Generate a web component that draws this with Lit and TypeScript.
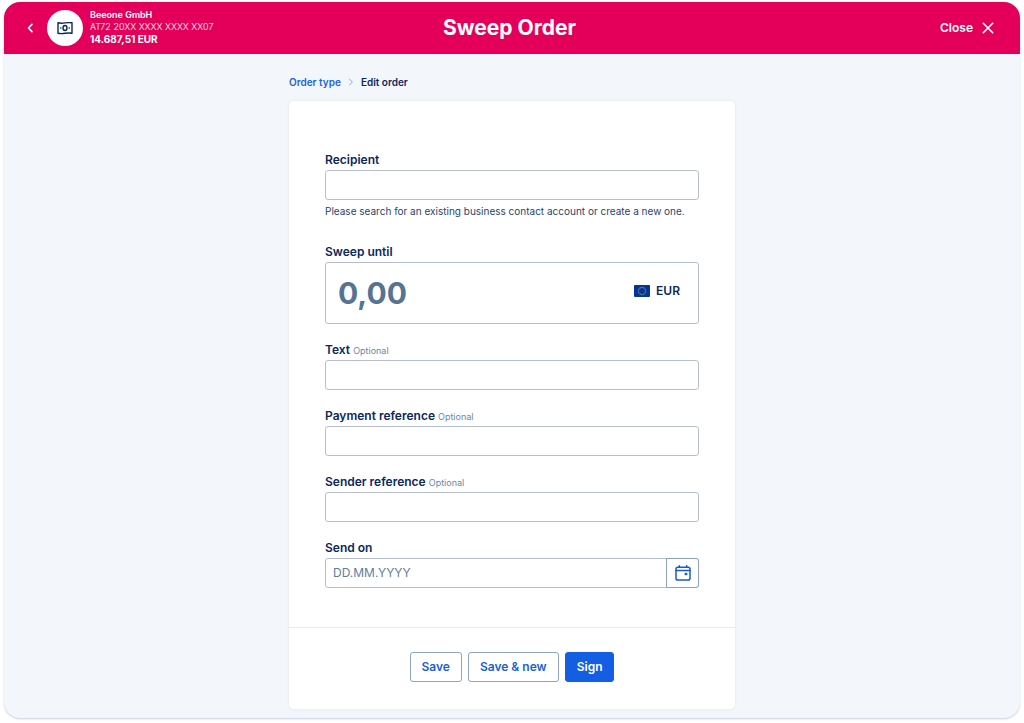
import { LitElement, html, css, svg, nothing } from "lit";
import { customElement, property } from "lit/decorators.js";

const stars = Array.from({ length: 12 }, (_, i) => {
  const a = (i * Math.PI) / 6;
  return { x: 8 + 3.6 * Math.sin(a), y: 6 - 3.6 * Math.cos(a) };
});

@customElement("order-header")
class OrderHeader extends LitElement {
  static styles = css`
    :host {
      display: block;
      background: #e4005a;
      color: #fff;
    }
    .bar {
      display: grid;
      grid-template-columns: 1fr auto 1fr;
      align-items: center;
      height: 52px;
      padding: 0 25px 0 20px;
    }
    .account {
      display: flex;
      align-items: center;
      gap: 7px;
    }
    button {
      display: flex;
      align-items: center;
      gap: 8px;
      padding: 0;
      border: 0;
      background: none;
      color: inherit;
      font: 600 12px/20px Inter, sans-serif;
      cursor: pointer;
    }
    .avatar {
      display: grid;
      place-items: center;
      width: 36px;
      height: 36px;
      margin-left: 4px;
      border-radius: 50%;
      background: #fff;
    }
    .details {
      padding-bottom: 2px;
      font-size: 10px;
      line-height: 12px;
    }
    .name {
      font-weight: 600;
      font-size: 9px;
    }
    .iban {
      font-size: 9px;
      font-weight: 300;
    }
    .balance {
      font-weight: 700;
    }
    h1 {
      margin: 0;
      font-size: 21px;
      line-height: 28px;
      font-weight: 700;
    }
    .close {
      justify-self: end;
    }
    svg {
      display: block;
    }
  `;

  render() {
    return html`
      <header class="bar">
        <div class="account">
          <button aria-label="Back">
            <svg width="12" height="12" viewBox="0 0 12 12" fill="none" stroke="currentColor" stroke-width="1.7" stroke-linecap="round" stroke-linejoin="round">
              <path d="M8 2.300 4.500 6 8 9.700" />
            </svg>
          </button>
          <div class="avatar">
            <svg width="16" height="14" viewBox="0 0 16 14" fill="none" stroke="#0a285c" stroke-width="1.400" stroke-linejoin="round">
              <path d="M1 1.800c2.300.5 4.600.5 7 .1s4.700-.4 7-.1v10.400c-2.300-.3-4.600-.3-7 .1s-4.700.4-7-.1z" />
              <ellipse cx="8" cy="7" rx="2" ry="2.500" />
              <path d="M3.700 7h.2M12.100 7h.2" stroke-linecap="round" />
            </svg>
          </div>
          <div class="details">
            <div class="name">Beeone GmbH</div>
            <div class="iban">AT72 20XX XXXX XXXX XX07</div>
            <div class="balance">14.687,51 EUR</div>
          </div>
        </div>
        <h1>Sweep Order</h1>
        <button class="close">
          Close
          <svg width="14" height="14" viewBox="0 0 14 14" fill="none" stroke="currentColor" stroke-width="1.600" stroke-linecap="round">
            <path d="m2.300 2.300 9.400 9.400M11.700 2.300l-9.400 9.400" />
          </svg>
        </button>
      </header>
    `;
  }
}

@customElement("form-field")
class FormField extends LitElement {
  @property() label = "";
  @property() kind: "text" | "amount" | "date" = "text";
  @property() hint = "";
  @property({ type: Boolean }) optional = false;

  static styles = css`
    :host {
      display: block;
    }
    label {
      display: block;
      font-size: 12px;
      line-height: 20px;
      font-weight: 600;
      color: #0a285c;
    }
    .optional {
      font-size: 9px;
      line-height: 12px;
      font-weight: 400;
      color: #6d86a5;
    }
    .box {
      display: flex;
      box-sizing: border-box;
      height: 30px;
      border: 1px solid #b5bfd0;
      border-radius: 3px;
      background: #fff;
    }
    .amount {
      align-items: center;
      height: 62px;
      padding-right: 18px;
    }
    input {
      flex: 1;
      min-width: 0;
      padding: 0 7px;
      border: 0;
      outline: 0;
      background: none;
      color: #0a285c;
      font: 400 12px/18px Inter, sans-serif;
    }
    input::placeholder {
      color: #627d9d;
      opacity: 1;
    }
    .amount input {
      padding: 0 12px;
      font-size: 30px;
      line-height: 40px;
      font-weight: 700;
    }
    .amount input::placeholder {
      color: #557392;
    }
    .currency {
      display: flex;
      align-items: center;
      gap: 6px;
      font-size: 12px;
      line-height: 18px;
      font-weight: 600;
      color: #0a285c;
      padding-bottom: 4px;
    }
    .picker {
      display: grid;
      place-items: center;
      width: 33px;
      margin: -1px;
      padding: 0;
      border: 1px solid #8da2bd;
      border-radius: 0 3px 3px 0;
      background: #fff;
      cursor: pointer;
    }
    .hint {
      margin: 4px 0 0;
      padding-bottom: 8px;
      font-size: 10px;
      line-height: 14px;
      color: #2b4272;
    }
    svg {
      display: block;
    }
  `;

  private trailing() {
    if (this.kind === "amount") {
      return html`<span class="currency">
        <svg width="16" height="12" viewBox="0 0 16 12">
          <rect width="16" height="12" rx="1" fill="#043399" />
          ${stars.map((s) => svg`<circle cx=${s.x} cy=${s.y} r="0.6" fill="#b5b35c" />`)}
        </svg>
        EUR
      </span>`;
    }
    if (this.kind === "date") {
      return html`<button type="button" class="picker" aria-label="Open calendar">
        <svg width="16" height="16" viewBox="0 0 16 16" fill="none" stroke="#1759d6" stroke-width="1.500" stroke-linecap="round">
          <rect x="1" y="2.300" width="14" height="12.700" rx="1.800" />
          <path d="M1.200 5.500h13.600M4.300.8v1.500M11.700.8v1.500" />
          <circle cx="10.900" cy="9" r="1" fill="#1759d6" stroke-width="1" />
        </svg>
      </button>`;
    }
    return nothing;
  }

  render() {
    const placeholder = this.kind === "amount" ? "0,00" : this.kind === "date" ? "DD.MM.YYYY" : "";
    return html`
      <label for="control">${this.label}${this.optional ? html` <span class="optional">Optional</span>` : nothing}</label>
      <div class="box ${this.kind}">
        <input id="control" type="text" placeholder=${placeholder} />
        ${this.trailing()}
      </div>
      ${this.hint ? html`<p class="hint">${this.hint}</p>` : nothing}
    `;
  }
}

@customElement("app-root")
class AppRoot extends LitElement {
  static styles = css`
    :host {
      display: flex;
      box-sizing: border-box;
      min-height: 100vh;
      padding: 2px 4px 5px;
      background: #fff;
      color: #0a285c;
      font-family: Inter, sans-serif;
    }
    .window {
      flex: 1;
      min-width: 0;
      border-radius: 16px;
      overflow: hidden;
      background: #f3f6fa;
      box-shadow: 0 1px 2px #c3cedd;
    }
    main {
      box-sizing: border-box;
      width: 100%;
      max-width: 446px;
      margin: 0 auto;
      padding: 20px 0 8px;
    }
    .crumbs {
      display: flex;
      align-items: center;
      gap: 7px;
      margin-bottom: 11px;
      font-size: 10px;
      line-height: 16px;
      font-weight: 600;
    }
    a {
      color: #1b62e0;
      text-decoration: none;
    }
    .card {
      border-radius: 5px;
      background: #fff;
      box-shadow: 0 0 3px #dfe5ed;
    }
    .fields {
      display: flex;
      flex-direction: column;
      gap: 16px;
      padding: 49px 36px 39px;
    }
    .actions {
      display: flex;
      justify-content: center;
      gap: 6px;
      padding: 24px 36px 27px;
      border-top: 1px solid #e7ebf0;
    }
    .actions button {
      height: 30px;
      padding: 0 11px;
      border: 1px solid #8da5c1;
      border-radius: 3px;
      background: #fff;
      color: #1b5fd9;
      font: 600 12px/18px Inter, sans-serif;
      cursor: pointer;
    }
    .actions .primary {
      border-color: #135ee2;
      background: #135ee2;
      color: #fff;
    }
  `;

  render() {
    return html`
      <div class="window">
        <order-header></order-header>
        <main>
          <nav class="crumbs" aria-label="Breadcrumb">
            <a href="#">Order type</a>
            <svg width="6" height="8" viewBox="0 0 6 8" fill="none" stroke="#9aa8b8" stroke-linecap="round" stroke-linejoin="round">
              <path d="M1.500 1.300 4.500 4l-3 2.700" />
            </svg>
            <span aria-current="page">Edit order</span>
          </nav>
          <form class="card">
            <div class="fields">
              <form-field
                label="Recipient"
                hint="Please search for an existing business contact account or create a new one."
              ></form-field>
              <form-field label="Sweep until" kind="amount"></form-field>
              <form-field label="Text" optional></form-field>
              <form-field label="Payment reference" optional></form-field>
              <form-field label="Sender reference" optional></form-field>
              <form-field label="Send on" kind="date"></form-field>
            </div>
            <div class="actions">
              <button type="button">Save</button>
              <button type="button">Save &amp; new</button>
              <button type="button" class="primary">Sign</button>
            </div>
          </form>
        </main>
      </div>
    `;
  }
}
